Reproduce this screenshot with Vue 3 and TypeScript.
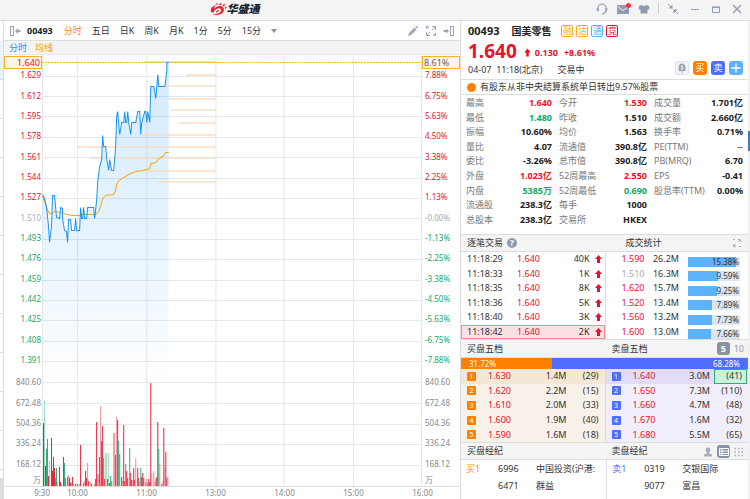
<script setup lang="ts">
interface Stat { label: string; value: string; tone?: 'up' | 'down' | 'mute' }
type Pair = [number, number]

const periods = ['分时', '五日', '日K', '周K', '月K', '1分', '5分', '15分']
const tags = [
  { text: '融', kind: 'amber' },
  { text: '沽', kind: 'amber' },
  { text: '通', kind: 'sky' },
  { text: '竞', kind: 'red' },
]

const prices = ['1.629', '1.612', '1.595', '1.578', '1.561', '1.544', '1.527', '1.510', '1.493', '1.476', '1.459', '1.442', '1.425', '1.408', '1.391']
const percents = ['7.88%', '6.75%', '5.63%', '4.50%', '3.38%', '2.25%', '1.13%', '-0.00%', '-1.13%', '-2.25%', '-3.38%', '-4.50%', '-5.63%', '-6.75%', '-7.88%']
const volumes = ['840.60', '672.48', '504.36', '336.24', '168.12']
const times = ['10:00', '11:00', '13:00', '14:00', '15:00', '16:00']
const tone = (i: number) => (i < 7 ? 'up' : i === 7 ? 'flat' : 'down')

const rowLines = [21, 41, 61, 82, 102, 123, 143, 163, 184, 204, 225, 245, 265, 286, 306, 327, 348, 369, 389, 410]
const colLines = [35, 104, 173, 241, 310]

// Samples are stored at three units per plot unit.
const toPoints = (samples: Pair[]) =>
  samples.map(([x, y]) => `${Math.floor(x / 3) - 1.5},${Math.floor(y / 3) - 4.5}`).join(' ')

const priceSamples: Pair[] = [
  [8, 433], [12, 445], [20, 470], [24, 530], [29, 578], [33, 530], [38, 435], [43, 435], [48, 503], [58, 505], [60, 472], [66, 474],
  [68, 505], [74, 540], [78, 543], [83, 578], [86, 508], [90, 508], [93, 541], [102, 541], [106, 506], [110, 541], [117, 541],
  [121, 472], [123, 505], [128, 505], [130, 472], [134, 505], [140, 505], [143, 472], [161, 472], [164, 506], [168, 450], [173, 398],
  [178, 350], [183, 328], [187, 256], [191, 288], [196, 290], [200, 325], [205, 360], [208, 328], [213, 360], [220, 360], [222, 325],
  [226, 285], [229, 195], [232, 184], [235, 220], [238, 254], [243, 218], [250, 218], [253, 184], [256, 217], [260, 217], [263, 184],
  [266, 217], [270, 254], [273, 217], [287, 217], [292, 184], [298, 184], [301, 254], [305, 217], [312, 184], [316, 184], [319, 217],
  [323, 184], [328, 217], [331, 110], [340, 110], [346, 144], [352, 74], [356, 110], [373, 110], [378, 60], [380, 37], [384, 37],
]
const averageSamples: Pair[] = [
  [8, 440], [14, 455], [20, 472], [28, 489], [38, 489], [43, 484], [65, 487], [80, 493], [98, 496], [120, 496], [123, 493], [165, 493],
  [175, 485], [182, 465], [187, 445], [196, 437], [220, 432], [226, 420], [230, 402], [236, 392], [250, 381], [270, 371], [290, 364],
  [320, 357], [328, 355], [331, 341], [346, 338], [352, 328], [360, 321], [368, 318], [375, 308], [384, 307],
]
const priceLine = toPoints(priceSamples)
const averageLine = toPoints(averageSamples)
const priceArea = `1,327 ${priceLine} 126,327`

// Turnover by price: left edge and top of each band, all ending at 13:00.
const bands: Pair[] = [[144, 19], [123, 30], [126, 43], [128, 54], [137, 67], [100, 79], [36, 91], [48, 102], [93, 115], [114, 126]]

type Bar = [number, number, 'r' | 'g' | 'p' | 'm']
const barSamples: Bar[] = [
  [133, 90, 'm'], [130, 160, 'r'], [136, 287, 'r'], [139, 237, 'g'], [142, 207, 'g'], [145, 317, 'r'], [148, 273, 'm'], [154, 205, 'r'],
  [157, 302, 'r'], [160, 261, 'r'], [163, 293, 'r'], [166, 325, 'g'], [169, 295, 'g'], [172, 337, 'p'], [178, 291, 'r'], [181, 337, 'r'],
  [184, 344, 'r'], [190, 261, 'r'], [193, 280, 'g'], [196, 325, 'g'], [202, 321, 'g'], [205, 315, 'p'], [208, 325, 'r'], [211, 340, 'r'],
  [214, 335, 'p'], [217, 321, 'r'], [220, 343, 'p'], [226, 343, 'r'], [232, 343, 'r'], [238, 343, 'p'], [241, 225, 'r'], [250, 338, 'g'],
  [253, 333, 'p'], [256, 304, 'r'], [259, 325, 'r'], [262, 279, 'p'], [265, 333, 'r'], [271, 337, 'p'], [274, 343, 'r'], [283, 343, 'p'],
  [286, 327, 'r'], [289, 157, 'r'], [292, 312, 'p'], [295, 312, 'p'], [298, 261, 'r'], [301, 108, 'p'], [304, 213, 'r'], [307, 168, 'r'],
  [310, 265, 'g'], [313, 327, 'r'], [316, 250, 'm'], [319, 250, 'm'], [325, 250, 'm'], [322, 327, 'r'], [328, 339, 'r'], [331, 318, 'g'],
  [334, 333, 'g'], [340, 189, 'p'], [343, 189, 'p'], [346, 255, 'r'], [349, 141, 'p'], [352, 151, 'r'], [355, 213, 'g'], [358, 252, 'g'],
  [364, 321, 'r'], [367, 333, 'p'], [370, 165, 'r'], [373, 333, 'r'], [376, 283, 'g'], [379, 302, 'r'], [382, 325, 'r'], [388, 235, 'g'],
  [391, 310, 'r'], [394, 330, 'r'], [397, 330, 'p'], [400, 294, 'r'], [403, 330, 'r'], [406, 265, 'p'], [412, 294, 'r'], [415, 325, 'r'],
  [418, 337, 'p'], [421, 294, 'g'], [424, 321, 'r'], [427, 309, 'r'], [430, 325, 'r'], [436, 335, 'g'], [439, 328, 'p'], [442, 339, 'g'],
  [445, 328, 'r'], [448, 336, 'r'], [451, 39, 'r'], [454, 309, 'p'], [460, 304, 'p'], [463, 335, 'p'], [466, 328, 'g'], [469, 321, 'r'],
  [472, 157, 'r'], [475, 238, 'g'], [478, 282, 'p'], [484, 342, 'r'], [487, 333, 'p'], [490, 175, 'r'], [493, 290, 'p'], [496, 245, 'r'],
  [499, 325, 'r'], [502, 321, 'p'],
]
const bars = barSamples.map(([x, top, kind]) => ({
  x: Math.floor(x / 3) - 42,
  height: Math.max(1, Math.round((348 - top) / 3)),
  kind,
}))

const stats: Stat[][] = [
  [
    { label: '最高', value: '1.640', tone: 'up' },
    { label: '最低', value: '1.480', tone: 'down' },
    { label: '振幅', value: '10.60%' },
    { label: '量比', value: '4.07' },
    { label: '委比', value: '-3.26%' },
    { label: '外盘', value: '1.023亿', tone: 'up' },
    { label: '内盘', value: '5385万', tone: 'down' },
    { label: '流通股', value: '238.3亿' },
    { label: '总股本', value: '238.3亿' },
  ],
  [
    { label: '今开', value: '1.530', tone: 'up' },
    { label: '昨收', value: '1.510' },
    { label: '均价', value: '1.563' },
    { label: '流通值', value: '390.8亿' },
    { label: '总市值', value: '390.8亿' },
    { label: '52周最高', value: '2.550', tone: 'up' },
    { label: '52周最低', value: '0.690', tone: 'down' },
    { label: '每手', value: '1000' },
    { label: '交易所', value: 'HKEX' },
  ],
  [
    { label: '成交量', value: '1.701亿' },
    { label: '成交额', value: '2.660亿' },
    { label: '换手率', value: '0.71%' },
    { label: 'PE(TTM)', value: '--', tone: 'mute' },
    { label: 'PB(MRQ)', value: '6.70' },
    { label: 'EPS', value: '-0.41' },
    { label: '股息率(TTM)', value: '0.00%' },
  ],
]

const ticks = [
  { time: '11:18:29', price: '1.640', size: '40K' },
  { time: '11:18:33', price: '1.640', size: '1K' },
  { time: '11:18:35', price: '1.640', size: '8K' },
  { time: '11:18:36', price: '1.640', size: '5K' },
  { time: '11:18:40', price: '1.640', size: '3K' },
  { time: '11:18:42', price: '1.640', size: '2K' },
]
const turnover = [
  { price: '1.590', size: '26.2M', share: '15.38%', fill: 92 },
  { price: '1.510', size: '16.3M', share: '9.59%', fill: 57 },
  { price: '1.620', size: '15.7M', share: '9.25%', fill: 55 },
  { price: '1.520', size: '13.4M', share: '7.89%', fill: 47 },
  { price: '1.560', size: '13.2M', share: '7.73%', fill: 46 },
  { price: '1.600', size: '13.0M', share: '7.66%', fill: 45 },
]
const bids = [
  { price: '1.630', size: '1.4M', count: '(29)' },
  { price: '1.620', size: '2.2M', count: '(15)' },
  { price: '1.610', size: '2.0M', count: '(33)' },
  { price: '1.600', size: '1.9M', count: '(40)' },
  { price: '1.590', size: '1.6M', count: '(18)' },
]
const asks = [
  { price: '1.640', size: '3.0M', count: '(41)' },
  { price: '1.650', size: '7.3M', count: '(110)' },
  { price: '1.660', size: '4.7M', count: '(48)' },
  { price: '1.670', size: '1.6M', count: '(32)' },
  { price: '1.680', size: '5.5M', count: '(65)' },
]
const books = [
  { side: 'bid', rows: bids },
  { side: 'ask', rows: asks },
]
const brokers = [
  { side: 'bid', rows: [{ queue: '买1', code: '6996', name: '中国投资(沪港:' }, { queue: '', code: '6471', name: '群益' }] },
  { side: 'ask', rows: [{ queue: '卖1', code: '0319', name: '交银国际' }, { queue: '', code: '9077', name: '富昌' }] },
]
</script>

<template>
  <div class="app">
    <header class="titlebar">
      <div class="brand">
        <svg width="17" height="14" viewBox="0 0 17 14">
          <path d="M1 10C0 6 3 3.500 6 3.500C4.500 4.500 4 5.500 4.500 6.500C6 4.500 9 3.500 12 4.500C15 6 14.500 10 11 12C8 13.500 4 13.500 2.500 12C6 12.500 10 11.500 11 9C11.500 7 10 6 8 6.500C5 7 3.500 9 4 10.500C2.500 10.500 1.500 10.500 1 10Z" fill="#e8252f" />
          <path d="M6 11C6 9 7.500 7.800 9.500 8.200C8.500 8.800 8 10 6 11Z" fill="#e8252f" />
          <path d="M5.500 2.500L7 .8L8 2.800ZM8.800 2.800L11 .5L11.200 3.200ZM12 3.500L15 1.500L14.300 4.800ZM14.800 5.500L17 4.500L15.800 7.300Z" fill="#e8252f" />
        </svg>
        <strong>华盛通</strong>
      </div>
      <nav class="window-tools">
        <div class="group">
          <button aria-label="客服">
            <svg width="12" height="12" viewBox="0 0 12 12" fill="none" stroke="#9ba6b8" stroke-width="1.300">
              <path d="M2 6V5A4 3.800 0 0 1 10 5V6M9.800 8C9.300 10 8 10.800 6 10.800" />
              <path d="M1.800 5V8.200M10.200 5V8.200" stroke-width="2.200" />
            </svg>
          </button>
          <button class="mail" aria-label="消息">
            <svg width="14" height="12" viewBox="0 0 14 12">
              <rect x="1" y="2" width="12" height="9" rx="1" fill="#8f9bb0" />
              <path d="M1.500 3.500L7 7.500L12.500 3.500" fill="none" stroke="#f4f4f4" />
            </svg>
            <i class="dot"></i>
          </button>
          <button aria-label="皮肤">
            <svg width="12" height="12" viewBox="0 0 12 12"><path d="M3.500 2Q6 4 8.500 2L11 3L11.500 6.500H9.500V10.500H2.500V6.500H.5L1 3Z" fill="#8f9bb0" /></svg>
          </button>
          <i class="divider"></i>
        </div>
        <div class="group wide">
          <button aria-label="缩小">
            <svg width="12" height="12" viewBox="0 0 12 12" fill="none" stroke="#8f9bb0">
              <path d="M1 1L4.500 4.500M11 11L7.500 7.500" />
              <path d="M5.500 1.500V5.500H1.500ZM6.500 10.500V6.500H10.500Z" fill="#8f9bb0" stroke="none" />
            </svg>
          </button>
          <button aria-label="最小化">
            <svg width="10" height="12" viewBox="0 0 10 12"><path d="M1 6.500H9" stroke="#8f9bb0" /></svg>
          </button>
          <button aria-label="最大化">
            <svg width="10" height="12" viewBox="0 0 10 12"><path d="M1.500 4.500H8.500V9.500H1.500ZM1 4H9" fill="none" stroke="#8f9bb0" /></svg>
          </button>
          <button aria-label="关闭">
            <svg width="10" height="12" viewBox="0 0 10 12"><path d="M1 2L9 10M9 2L1 10" stroke="#8f9bb0" stroke-width="1.300" /></svg>
          </button>
        </div>
      </nav>
    </header>

    <div class="workspace">
      <aside class="edge-list">
        <i v-for="n in 11" :key="n" :class="{ active: n === 1 }"></i>
        <b></b>
      </aside>

      <main class="chart-pane">
        <div class="toolbar">
          <button aria-label="收起左栏">
            <svg width="12" height="12" viewBox="0 0 12 12">
              <rect x="1.500" y="1.500" width="3" height="9" fill="none" stroke="#9ba6b8" />
              <path d="M6 6L9 3V5H11.500V7H9V9Z" fill="#9ba6b8" />
            </svg>
          </button>
          <strong>00493</strong>
          <div class="periods">
            <button v-for="(p, i) in periods" :key="p" :class="{ on: i === 0 }">{{ p }}</button>
            <button class="more" aria-label="更多周期"><i></i></button>
          </div>
          <div class="tools">
            <button aria-label="画线">
              <svg width="12" height="12" viewBox="0 0 12 12"><path d="M1 11L2 8L7.500 2.500L9.500 4.500L4 10ZM8.200 1.800L9.200 .8L11.200 2.800L10.200 3.800Z" fill="#9ba6b8" /></svg>
            </button>
            <button aria-label="全屏">
              <svg width="12" height="12" viewBox="0 0 12 12" fill="none" stroke="#9ba6b8">
                <path d="M1.500 4V1.500H4M7 1.500H10.500V5M10.500 8V10.500H8M5 10.500H1.500V7M7 5L10 2M5 7L2 10" />
                <path d="M2 2L3.500 3.500M8.500 8.500L10 10" />
              </svg>
            </button>
            <button aria-label="收起右栏">
              <svg width="12" height="12" viewBox="0 0 12 12">
                <rect x="7.500" y="1.500" width="3" height="9" fill="none" stroke="#9ba6b8" />
                <path d="M6 6L3.500 3.500V5H.5V7H3.500V8.500Z" fill="#9ba6b8" />
              </svg>
            </button>
          </div>
        </div>
        <div class="legend"><span class="sky-text">分时</span><span class="amber-text">均线</span></div>

        <div class="plot-row">
          <div class="axis left">
            <span v-for="(v, i) in prices" :key="v" :class="tone(i)">{{ v }}</span>
            <span class="spacer"></span>
            <span v-for="v in volumes" :key="v">{{ v }}</span>
            <span>万</span>
            <b class="marker">1.640</b>
          </div>
          <svg class="plot" viewBox="0 0 379 431" preserveAspectRatio="none">
            <defs>
              <linearGradient id="shade" x1="0" y1="0" x2="0" y2="1">
                <stop offset="0" stop-color="#3aa0f5" stop-opacity=".22" />
                <stop offset=".6" stop-color="#3aa0f5" stop-opacity=".11" />
                <stop offset="1" stop-color="#3aa0f5" stop-opacity="0" />
              </linearGradient>
            </defs>
            <g class="grid">
              <rect v-for="y in rowLines" :key="y" x="0" :y="y" width="379" height="1" />
              <rect v-for="x in colLines" :key="x" :x="x" y="0" width="1" height="431" />
              <rect x="0" y="0" width="1" height="431" />
              <rect x="378" y="0" width="1" height="431" />
            </g>
            <polygon :points="priceArea" fill="url(#shade)" />
            <rect x="102" y="6" width="71" height="2" fill="#dfe1f0" />
            <rect v-for="[x, y] in bands" :key="y" :x="x" :y="y" :width="173 - x" height="2" fill="#f9dcc0" fill-opacity=".7" />
            <path d="M0 7.500H379" stroke="#fbb029" stroke-dasharray="2 1" />
            <polyline :points="averageLine" fill="none" stroke="#f5a81f" />
            <polyline :points="priceLine" fill="none" stroke="#1794f5" />
            <rect v-for="b in bars" :key="b.x + b.kind" :class="b.kind" :x="b.x" :y="431 - b.height" width="1" :height="b.height" />
          </svg>
          <div class="axis right">
            <span v-for="(v, i) in percents" :key="v" :class="tone(i)">{{ v }}</span>
            <span class="spacer"></span>
            <span v-for="v in volumes" :key="v">{{ v }}</span>
            <span>万</span>
            <b class="marker">8.61%</b>
          </div>
        </div>
        <div class="time-axis">
          <span class="open">9:30</span>
          <span v-for="t in times" :key="t">{{ t }}</span>
        </div>
      </main>

      <section class="quote-pane">
        <div class="summary">
          <div class="identity">
            <strong class="code">00493</strong>
            <strong class="company">国美零售</strong>
            <span class="tags"><em v-for="t in tags" :key="t.text" :class="t.kind">{{ t.text }}</em></span>
          </div>
          <div class="last">
            <strong class="big">1.640</strong>
            <svg width="7" height="9" viewBox="0 0 7 9"><path d="M3.500 .5L6.800 4.500H4.800V8.500H2.200V4.500H.2Z" fill="#e4132b" /></svg>
            <strong>0.130</strong>
            <strong>+8.61%</strong>
          </div>
          <div class="session">
            <span>04-07&nbsp; 11:18(北京)</span>
            <span>交易中</span>
            <div class="actions">
              <button class="alert" aria-label="提醒">
                <svg width="10" height="10" viewBox="0 0 10 10">
                  <path d="M5 .5C7.500 .5 8.500 2.500 8.500 5V8H1.500V5C1.500 2.500 2.500 .5 5 .5ZM4 8.500H6V9.500H4Z" fill="#9ba6b8" />
                  <path d="M6 3H4.500V4.700H5.500V6.300H4" fill="none" stroke="#f1f4f8" />
                </svg>
              </button>
              <button class="buy">买</button>
              <button class="sell">卖</button>
              <button class="add" aria-label="加自选">
                <svg width="10" height="10" viewBox="0 0 10 10"><path d="M5 .5V9.500M.5 5H9.500" stroke="#fff" stroke-width="1.300" /></svg>
              </button>
            </div>
          </div>
        </div>
        <div class="notice"><i></i><a href="#">有股东从非中央结算系统单日转出9.57%股票</a></div>

        <div class="stats">
          <dl v-for="(col, c) in stats" :key="c">
            <div v-for="s in col" :key="s.label"><dt>{{ s.label }}</dt><dd :class="s.tone">{{ s.value }}</dd></div>
          </dl>
        </div>

        <div class="head">
          <h2>逐笔交易<button class="help" aria-label="说明">?</button></h2>
          <h2 class="deep">成交统计</h2>
          <button class="end" aria-label="展开">
            <svg width="10" height="10" viewBox="0 0 10 10" fill="none" stroke="#a8b2c0"><path d="M6 1.500H8.500V4M8.500 1.500L6 4M4 8.500H1.500V6M1.500 8.500L4 6M1 1.500H3M7 8.500H9" /></svg>
          </button>
        </div>
        <div class="halves six">
          <table class="ticks">
            <tbody>
              <tr v-for="(t, i) in ticks" :key="t.time" :class="{ current: i === 5 }">
                <td>{{ t.time }}</td>
                <td class="up">{{ t.price }}</td>
                <td class="num">{{ t.size }}</td>
                <td class="num"><svg width="7" height="8" viewBox="0 0 7 8"><path d="M3.500 0L7 4H5V8H2V4H0Z" fill="#e4132b" /></svg></td>
              </tr>
            </tbody>
          </table>
          <table class="turnover">
            <tbody>
              <tr v-for="(t, i) in turnover" :key="t.price">
                <td :class="i === 1 ? 'flat' : 'up'">{{ t.price }}</td>
                <td class="num">{{ t.size }}</td>
                <td><div class="meter"><i :style="{ width: t.fill + '%' }"></i><span>{{ t.share }}</span></div></td>
              </tr>
            </tbody>
          </table>
        </div>

        <div class="head tall">
          <h2>买盘五档</h2>
          <h2>卖盘五档</h2>
          <div class="end depth"><button class="chosen">5</button><button>10</button></div>
        </div>
        <div class="ratio"><span :style="{ width: '31.72%' }">31.72%</span><span>68.28%</span></div>
        <div class="halves five">
          <table v-for="b in books" :key="b.side" class="book" :class="b.side">
            <tbody>
              <tr v-for="(r, i) in b.rows" :key="r.price">
                <td><i class="rank">{{ i + 1 }}</i></td>
                <td class="up">{{ r.price }}</td>
                <td class="num">{{ r.size }}</td>
                <td class="num count" :class="{ flash: b.side === 'ask' && i === 0 }">{{ r.count }}</td>
              </tr>
            </tbody>
          </table>
        </div>

        <div class="head">
          <h2>买盘经纪</h2>
          <h2>卖盘经纪</h2>
          <div class="end depth">
            <button aria-label="经纪">
              <svg width="10" height="10" viewBox="0 0 10 10"><path d="M5 .5A2.300 2.500 0 0 1 6.200 5.200V6.500L9 7.500V9.500H1V7.500L3.800 6.500V5.200A2.300 2.500 0 0 1 5 .5Z" fill="#a3adbb" /></svg>
            </button>
            <button class="chosen" aria-label="列表">
              <svg width="10" height="10" viewBox="0 0 10 10" fill="none" stroke="#fff"><path d="M.5 1.500H9.500V8.500H.5ZM.5 4H9.500M.5 6.500H9.500M3 1.500V8.500" /></svg>
            </button>
            <button aria-label="网格">
              <svg width="10" height="10" viewBox="0 0 10 10" stroke="#a3adbb" stroke-width="1.500" stroke-dasharray="1.500 2"><path d="M.5 1.500H9.500M.5 5H9.500M.5 8.500H9.500" /></svg>
            </button>
          </div>
        </div>
        <div class="halves brokers">
          <table v-for="b in brokers" :key="b.side" :class="b.side">
            <tbody>
              <tr v-for="r in b.rows" :key="r.code">
                <td class="queue">{{ r.queue }}</td>
                <td>{{ r.code }}</td>
                <td>{{ r.name }}</td>
              </tr>
            </tbody>
          </table>
        </div>
      </section>
      <div class="edge-right"><i></i></div>
    </div>
  </div>
</template>

<style>
body { margin: 0; background: #fff; }
</style>

<style scoped>
.app, .app * { box-sizing: border-box; }
.app {
  display: flex; flex-direction: column; height: 100vh; min-height: 480px;
  font: 9px/12px "Noto Sans", "Noto Sans CJK SC", sans-serif; color: #333; overflow: hidden;
}
button { padding: 0; border: 0; background: none; font: inherit; color: inherit; display: flex; align-items: center; justify-content: center; }
svg { display: block; }
i, em { font-style: normal; }
h2, dl, dd { margin: 0; font: inherit; }
a { color: inherit; text-decoration: none; }
.up { color: #e4132b; }
.down { color: #12a866; }
.flat { color: #aaa; }

.titlebar { display: flex; align-items: center; height: 21px; background: #f4f4f4; border-bottom: 1px solid #ddd; }
.brand { flex: 1; display: flex; justify-content: center; align-items: center; padding: 0 0 2px 6px; }
.brand strong { font-size: 11px; line-height: 16px; font-weight: 900; font-style: italic; color: #14202c; }
.window-tools { display: flex; align-items: center; gap: 8px; width: 287px; padding: 0 8px 3px 0; justify-content: flex-end; }
.group { display: flex; align-items: center; gap: 8px; }
.group.wide { gap: 11px; }
.mail { position: relative; }
.dot { position: absolute; top: 0; right: -1px; width: 5px; height: 5px; border-radius: 50%; background: #f5333f; }
.divider { width: 1px; height: 11px; background: #ccc; }

.workspace { flex: 1; display: flex; min-height: 0; }
.edge-list { width: 4px; padding-top: 20px; border-right: 1px solid #ddd; background: #fff; position: relative; overflow: hidden; }
.edge-list i { display: block; height: 39px; border-bottom: 1px solid #ddd; }
.edge-list .active { background: #e8f3fe; }
.edge-list b { position: absolute; left: 0; bottom: 0; width: 3px; height: 21px; background: #ddd; }
.edge-right { width: 2px; padding-top: 110px; background: #f0f0f0; }
.edge-right i { display: block; height: 20px; background: #3f7db8; }

.chart-pane { flex: 1; display: flex; flex-direction: column; min-width: 0; }
.toolbar { display: flex; align-items: center; height: 20px; padding: 0 5px; border-bottom: 1px solid #ddd; }
.toolbar strong { margin-left: 6px; color: #222; }
.periods { display: flex; gap: 10px; margin-left: 11px; flex: 1; }
.periods .on { color: #ff7f00; }
.more i { border: 3px solid transparent; border-top: 4px solid #7f90a5; border-bottom: 0; }
.tools { display: flex; gap: 6px; }
.legend { display: flex; gap: 8px; align-items: center; height: 14px; padding-left: 5px; background: #f4f4f4; border-bottom: 1px solid #e8e8e8; }
.sky-text { color: #1794f5; }
.amber-text { color: #f5a000; }

.plot-row { flex: 1; display: grid; grid-template-columns: 38px 1fr 38px; min-height: 0; }
.plot { width: 100%; height: 100%; min-height: 0; }
.plot .grid { fill: #e5e7ea; }
.plot .r { fill: #e0253c; }
.plot .g { fill: #2fae77; }
.plot .p { fill: #f08d97; }
.plot .m { fill: #9fdcc0; }
.axis { position: relative; display: grid; grid-template-rows: repeat(15, 1fr) 2px repeat(5, 1fr) 12px; padding-top: 10px; min-height: 0; font-size: 8px; line-height: 10px; color: #888; }
.axis span { display: flex; align-items: center; min-height: 0; }
.axis .up { color: #e4132b; }
.axis .down { color: #12a866; }
.axis .flat { color: #aaa; }
.left span { justify-content: flex-end; padding-right: 1px; }
.right span { padding-left: 3px; }
.marker { position: absolute; top: 1px; left: 0; right: 0; height: 13px; border: 1px solid #fbb029; background: #fff4e8; font-size: 9px; line-height: 11px; font-weight: 400; }
.left .marker { text-align: right; padding-right: 1px; color: #e4132b; }
.right .marker { padding-left: 1px; color: #666; }
.time-axis { display: grid; grid-template-columns: 39px repeat(6, 1fr); height: 13px; padding-right: 3px; border-top: 1px solid #ddd; font-size: 8px; line-height: 11px; color: #888; text-align: center; }
.time-axis .open { text-align: right; margin-right: -7px; }

.quote-pane { width: 288px; display: flex; flex-direction: column; border-left: 1px solid #ddd; min-width: 0; }
.summary { height: 58px; padding: 0 5px 0 7px; color: #333; }
.identity { display: flex; align-items: center; height: 20px; font-size: 10px; color: #222; }
.identity .code { font-size: 11px; }
.company { margin-left: 12px; }
.tags { display: flex; gap: 3px; margin-left: 10px; }
.tags em { width: 12px; height: 12px; border: 1px solid; border-radius: 2px; font-size: 9px; line-height: 10px; display: flex; justify-content: center; }
.amber { color: #f9ab28; }
.sky { color: #5aaef8; }
.red { color: #e4132b; }
.last { display: flex; align-items: center; height: 20px; color: #e4132b; }
.last svg { margin: 2px 4px 0 7px; }
.last strong + strong { margin-left: 6px; }
.last .big { font-size: 19px; line-height: 20px; }
.last strong:not(.big) { padding-top: 4px; }
.session { display: flex; height: 18px; line-height: 18px; gap: 15px; }
.actions { display: flex; gap: 4px; margin-left: auto; }
.actions button { width: 14px; height: 14px; border-radius: 3px; color: #fff; line-height: 14px; }
.actions .alert { background: #f1f4f8; border: 1px solid #dde2e8; }
.actions .buy { background: #ff7f00; }
.actions .sell { background: #4f6dff; }
.actions .add { background: #5cb2fb; }
.notice { display: flex; align-items: center; gap: 4px; height: 16px; padding-left: 6px; border-top: 1px solid #ddd; border-bottom: 1px solid #ddd; }
.notice i { width: 9px; height: 9px; border-radius: 50%; background: #ff7f00; }

.stats { flex: 131 1 0; display: grid; grid-template-columns: 86fr 88fr 89fr; gap: 7px; padding: 1px 5px 7px; min-height: 139px; }
.stats dl { display: grid; grid-template-rows: repeat(9, 1fr); }
.stats dl div { display: flex; justify-content: space-between; align-items: center; }
.stats dt { color: #777; white-space: nowrap; }
.stats dd { font-weight: 700; }
.stats dd:not(.up):not(.down) { color: #222; }
.stats .mute { font-weight: 400; }

.head { display: grid; grid-template-columns: 1fr 1fr; align-items: center; position: relative; height: 18px; padding-left: 6px; background: #f4f4f4; border-top: 1px solid #ddd; border-bottom: 1px solid #ddd; }
.head.tall { height: 19px; }
.head h2 { display: flex; align-items: center; gap: 4px; }
.head h2 + h2 { padding-left: 4px; }
.head h2.deep { padding-left: 18px; }
.help { width: 10px; height: 10px; border-radius: 50%; background: #8f9bb0; color: #fff; font-size: 8px; line-height: 10px; font-weight: 700; }
.end { position: absolute; right: 4px; top: 2px; }
button.end { top: 3px; right: 6px; }
.depth { display: flex; gap: 4px; height: 13px; align-items: center; color: #8f9bb0; }
.chosen { width: 13px; height: 13px; border-radius: 3px; background: #8593a5; color: #fff; font-weight: 700; }

.halves { display: grid; grid-template-columns: 1fr 1fr; min-height: 0; }
.six { flex: 87 1 0; }
.five { flex: 73 1 0; }
table, tbody { display: grid; grid-auto-rows: 1fr; min-height: 0; }
table + table { border-left: 1px solid #ddd; }
tr { display: grid; align-items: center; min-height: 0; }
td { padding: 0; display: flex; align-items: center; white-space: nowrap; }
.num { justify-content: flex-end; }
.ticks tr { grid-template-columns: 50px 1fr 1fr 12px; padding: 0 3px 0 6px; }
.ticks .current { background: #fadfe3; box-shadow: inset 0 0 0 1px #ee8f9a; }
.turnover tr { grid-template-columns: 22px 1fr 52px; gap: 9px; padding: 0 8px 0 16px; }
.turnover td:last-child { align-self: end; }
.meter { position: relative; width: 100%; height: 10px; background: #dce5ee; display: flex; justify-content: flex-end; font-size: 8px; line-height: 10px; }
.meter i { position: absolute; inset: 0 auto 0 0; background: #5cb2fb; }
.meter span { position: relative; padding-right: 1px; }

.ratio { display: flex; height: 11px; background: #4f6dff; color: #fff; font-size: 8px; line-height: 11px; }
.ratio span:first-child { background: #ff7f00; padding-left: 8px; }
.ratio span:last-child { margin-left: auto; padding-right: 8px; }
.book tr { grid-template-columns: 21px 1fr 1fr 32px; padding-left: 6px; padding-right: 6px; background: #f7f1e9; }
.book tr:first-child { background: #f3e8d6; }
.ask.book tr { background: #f1eefb; }
.ask.book tr:first-child { background: #e2dcf7; }
.rank { width: 9px; height: 9px; border-radius: 1px; background: #ff7f00; color: #fff; font-size: 7px; line-height: 9px; text-align: center; }
.ask .rank { background: #4f6dff; }
.count { align-self: stretch; }
.flash { background: #c8f2dc; box-shadow: inset 0 0 0 1px #2fae77; margin-right: -5px; padding-right: 5px; margin-left: 4px; }

.brokers { height: 39px; }
.brokers table { padding: 0 11px 4px 5px; }
.brokers tr { grid-template-columns: 32px 38px 1fr; }
.bid .queue { color: #ff9020; }
.ask .queue { color: #4f6dff; }
</style>
